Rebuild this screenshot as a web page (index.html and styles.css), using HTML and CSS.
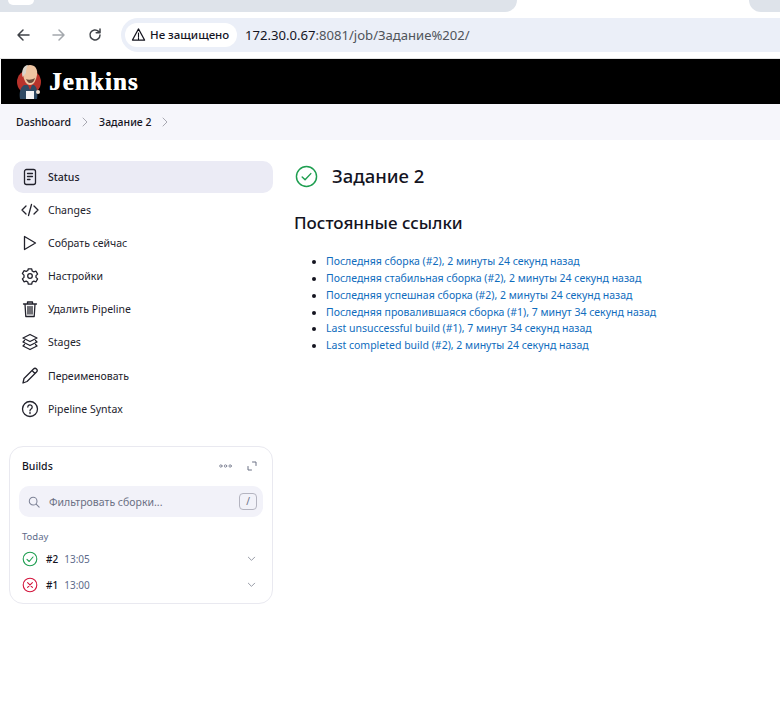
FILE: index.html
```html
<!DOCTYPE html>
<html lang="ru">
<head>
    <meta charset="UTF-8">
    <meta name="viewport" content="width=device-width, initial-scale=1.0">
    <title>Задание 2 - Jenkins</title>
    <link rel="stylesheet" href="styles.css">
</head>
<body>
    <div class="tab-strip">
        <div class="tab-left"><span class="tab-nub"></span></div>
        <div class="tab-right"></div>
    </div>
    <div class="toolbar">
        <svg class="nav-icon" viewBox="0 0 16 16"><path d="M14 8H3M8 3 3 8l5 5"/></svg>
        <svg class="nav-icon nav-off" viewBox="0 0 16 16"><path d="M2 8h11M8 3l5 5-5 5"/></svg>
        <svg class="nav-icon" viewBox="0 0 16 16"><path d="M13 8a5 5 0 1 1-1.500-3.600L13 5.800M13 2v3.800H9.200"/></svg>
        <div class="omnibox">
            <div class="not-secure">
                <svg class="warn-icon" viewBox="0 0 16 16"><path d="M8 2 1.500 14h13zM8 6.500v4M8 11.500v1.200"/></svg>
                <span>Не защищено</span>
            </div>
            <div class="url"><b>172.30.0.67</b>:8081/job/Задание%202/</div>
        </div>
    </div>

    <header class="site-header">
        <svg class="logo" viewBox="0 0 26 36">
            <circle cx="13" cy="18" r="12" fill="#b8332c"/>
            <path d="M4 35c-1-6 0-11 4-14h10c3 2 4 7 3 14z" fill="#2f4a63"/>
            <path d="M7 11C6 5 9 1 14 1s8 4 7 10c-1 5-3 10-7 10-4 0-6-5-7-10z" fill="#eec4a2"/>
            <path d="M6.500 13C5 6 8 1 12 1c-2 3-2 6-2 8-1 1-2 2-3.500 4z" fill="#d9d4cc"/>
            <path d="M10 15c2 1 6 1 9-1-1 3-2 5-5 5-2 0-3-2-4-4z" fill="#6b4a3a"/>
            <path d="M12 21l2 5 2-5z" fill="#b8332c"/>
            <rect x="10" y="27" width="8" height="8" fill="#f4f4f4"/>
            <circle cx="22" cy="28" r="2" fill="#f0e0d0"/>
        </svg>
        <span class="brand">Jenkins</span>
    </header>

    <nav class="breadcrumbs">
        <span>Dashboard</span>
        <svg class="crumb-sep" viewBox="0 0 8 10"><path d="M2 1l4 4-4 4"/></svg>
        <span>Задание 2</span>
        <svg class="crumb-sep" viewBox="0 0 8 10"><path d="M2 1l4 4-4 4"/></svg>
    </nav>

    <div class="layout">
        <aside class="sidebar">
            <ul class="tasks">
                <li class="task task-active">
                    <svg class="task-icon" viewBox="0 0 18 18"><rect x="3.500" y="1.500" width="11" height="15" rx="2"/><path d="M6.500 5.500h5M6.500 8.500h5M6.500 11.500h2.500"/></svg>
                    <span>Status</span>
                </li>
                <li class="task">
                    <svg class="task-icon" viewBox="0 0 18 18"><path d="M5 5 1 9l4 4M13 5l4 4-4 4M10.500 3.500l-3 11"/></svg>
                    <span>Changes</span>
                </li>
                <li class="task">
                    <svg class="task-icon" viewBox="0 0 18 18"><path d="M3.500 2.500v13l11-6.500z"/></svg>
                    <span>Собрать сейчас</span>
                </li>
                <li class="task">
                    <svg class="task-icon" viewBox="0 0 18 18"><path d="M7.300 1.800h3.400l.5 2.200 1.600.9 2.200-.7 1.600 2.900-1.600 1.500v1.800l1.600 1.500-1.600 2.900-2.200-.7-1.600.9-.5 2.200H7.300l-.5-2.200-1.600-.9-2.200.7-1.600-2.900 1.600-1.500V8.100L1.400 6.600 3 3.700l2.200.7 1.600-.9z"/><circle cx="9" cy="9" r="2.300"/></svg>
                    <span>Настройки</span>
                </li>
                <li class="task">
                    <svg class="task-icon" viewBox="0 0 18 18"><path d="M2.500 4h13M6.500 4V2h5v2M4 4l.8 12.500h8.400L14 4M7 6.500v7.500M9 6.500v7.500M11 6.500v7.500"/></svg>
                    <span>Удалить Pipeline</span>
                </li>
                <li class="task">
                    <svg class="task-icon" viewBox="0 0 18 18"><path d="M9 1.500 2 5l7 3.500L16 5zM3.500 7.500 2 9l7 3.500L16 9l-1.500-1.500M3.500 11.500 2 13l7 3.500 7-3.500-1.500-1.500"/></svg>
                    <span>Stages</span>
                </li>
                <li class="task">
                    <svg class="task-icon" viewBox="0 0 18 18"><path d="M2 16l1-4.500L12.500 2a1.800 1.800 0 0 1 3 3L6 14.500zM11 3.500l3 3"/></svg>
                    <span>Переименовать</span>
                </li>
                <li class="task">
                    <svg class="task-icon" viewBox="0 0 18 18"><circle cx="9" cy="9" r="7.500"/><path d="M6.800 7a2.200 2.200 0 1 1 3.300 2c-.8.500-1.100.9-1.100 1.800M9 12.500v1"/></svg>
                    <span>Pipeline Syntax</span>
                </li>
            </ul>

            <section class="builds">
                <div class="builds-head">
                    <span class="builds-title">Builds</span>
                    <svg class="dots" viewBox="0 0 14 4"><circle cx="2" cy="2" r="1.300"/><circle cx="7" cy="2" r="1.300"/><circle cx="12" cy="2" r="1.300"/></svg>
                    <svg class="expand" viewBox="0 0 10 10"><path d="M5.500 1H9v3.500M1 5.500V9h3.500"/></svg>
                </div>
                <div class="filter">
                    <svg class="search-icon" viewBox="0 0 14 14"><circle cx="6" cy="6" r="4.500"/><path d="M9.500 9.500 13 13"/></svg>
                    <span class="filter-text">Фильтровать сборки...</span>
                    <kbd class="slash">/</kbd>
                </div>
                <div class="day">Today</div>
                <div class="build">
                    <svg class="build-icon ok" viewBox="0 0 16 16"><circle cx="8" cy="8" r="6.800"/><path d="M5 8.300l2.200 2.200L11 6"/></svg>
                    <span class="build-num">#2</span>
                    <span class="build-time">13:05</span>
                    <svg class="chev" viewBox="0 0 10 6"><path d="M1.500 1 5 4.500 8.500 1"/></svg>
                </div>
                <div class="build">
                    <svg class="build-icon fail" viewBox="0 0 16 16"><circle cx="8" cy="8" r="6.800"/><path d="M5.600 5.600l4.800 4.800M10.400 5.600l-4.800 4.800"/></svg>
                    <span class="build-num">#1</span>
                    <span class="build-time">13:00</span>
                    <svg class="chev" viewBox="0 0 10 6"><path d="M1.500 1 5 4.500 8.500 1"/></svg>
                </div>
            </section>
        </aside>

        <main class="content">
            <div class="job-title">
                <svg class="job-icon" viewBox="0 0 24 24"><circle cx="12" cy="12" r="10.500"/><path d="M7.500 12.500l3 3 6-6.500"/></svg>
                <h1>Задание 2</h1>
            </div>
            <h2>Постоянные ссылки</h2>
            <ul class="permalinks">
                <li><a href="#">Последняя сборка (#2), 2 минуты 24 секунд назад</a></li>
                <li><a href="#">Последняя стабильная сборка (#2), 2 минуты 24 секунд назад</a></li>
                <li><a href="#">Последняя успешная сборка (#2), 2 минуты 24 секунд назад</a></li>
                <li><a href="#">Последняя провалившаяся сборка (#1), 7 минут 34 секунд назад</a></li>
                <li><a href="#">Last unsuccessful build (#1), 7 минут 34 секунд назад</a></li>
                <li><a href="#">Last completed build (#2), 2 минуты 24 секунд назад</a></li>
            </ul>
        </main>
    </div>
</body>
</html>
```

FILE: styles.css
```css
* {
    box-sizing: border-box;
}

body {
    margin: 0;
    padding: 0;
    height: 710px;
    overflow: hidden;
    background-color: #fff;
    color: #14141f;
    font-family: "Noto Sans", Arial, sans-serif;
    font-size: 10.500px;
}

svg {
    display: block;
    flex: none;
    fill: none;
    stroke: currentColor;
    stroke-linecap: round;
    stroke-linejoin: round;
}

/* browser chrome */
.tab-strip {
    display: flex;
    justify-content: space-between;
    height: 12px;
}

.tab-left {
    width: 517px;
    background-color: #dee3ea;
    border-bottom-right-radius: 12px;
    padding-left: 8px;
}

.tab-nub {
    display: block;
    width: 26px;
    height: 5px;
    background-color: #fff;
    border-bottom-left-radius: 6px;
    border-bottom-right-radius: 6px;
}

.tab-right {
    width: 31px;
    background-color: #dee3ea;
    border-bottom-left-radius: 12px;
}

.toolbar {
    display: flex;
    align-items: center;
    height: 47px;
    padding: 6px 0 7px 15px;
    border-bottom: 1px solid #e4e4e4;
}

.nav-icon {
    width: 16px;
    height: 16px;
    margin-right: 20px;
    color: #3f4348;
    stroke-width: 1.500;
}

.nav-off {
    color: #a4a8ad;
}

.omnibox {
    display: flex;
    align-items: center;
    flex: 1;
    height: 34px;
    margin-left: -2px;
    padding-left: 4px;
    background-color: #ebeff8;
    border-radius: 17px 0 0 17px;
}

.not-secure {
    display: flex;
    align-items: center;
    gap: 4px;
    width: 112px;
    height: 24px;
    padding-left: 6px;
    background-color: #fff;
    border-radius: 12px;
    font-size: 11.500px;
    font-weight: 500;
    white-space: nowrap;
}

.warn-icon {
    width: 15px;
    height: 15px;
    stroke-width: 1.200;
}

.url {
    margin-left: 8px;
    font-size: 13.100px;
    color: #50545a;
}

.url b {
    font-weight: 400;
    color: #14141f;
}

/* jenkins header */
.site-header {
    display: flex;
    align-items: center;
    gap: 7px;
    height: 45px;
    margin-left: 1px;
    padding-left: 15px;
    background-color: #000;
}

.logo {
    width: 26px;
    height: 36px;
    stroke: none;
}

.brand {
    font-family: "Liberation Serif", serif;
    font-size: 25px;
    font-weight: 700;
    letter-spacing: 1.100px;
    color: #fff;
    text-shadow: .5px 0 0 #fff;
}

.breadcrumbs {
    display: flex;
    align-items: center;
    height: 36px;
    padding-left: 16px;
    background-color: #f6f6fb;
    font-weight: 500;
}

.crumb-sep {
    width: 8px;
    height: 10px;
    margin: 0 10px;
    color: #a9a9b2;
    stroke-width: 1;
}

.layout {
    display: flex;
}

/* sidebar */
.sidebar {
    width: 273px;
    flex: none;
    padding: 21px 0 0 9px;
}

.tasks {
    list-style: none;
    margin: 0;
    padding: 0 0 0 4px;
}

.task {
    display: flex;
    align-items: center;
    gap: 9px;
    height: 33.200px;
    padding-left: 8px;
    border-radius: 10px;
    color: #22222c;
}

.task-active {
    height: 32px;
    padding-bottom: 1px;
    background-color: #ebebf5;
    font-weight: 500;
}

.task-icon {
    width: 18px;
    height: 18px;
    stroke-width: 1.300;
}

.builds {
    height: 158px;
    margin-top: 21px;
    padding: 0 9px;
    border: 1px solid #e9e9f0;
    border-radius: 14px;
}

.builds-head {
    display: flex;
    align-items: center;
    height: 38px;
    margin-bottom: 1px;
    padding: 0 6px 0 3px;
}

.builds-title {
    flex: 1;
    font-weight: 500;
}

.dots {
    width: 13px;
    height: 4px;
    margin-right: 15px;
    color: #6b7084;
    stroke-width: .8;
}

.expand {
    width: 10px;
    height: 10px;
    color: #6b7084;
    stroke-width: 1;
}

.filter {
    display: flex;
    align-items: center;
    height: 31px;
    padding: 0 6px 0 9px;
    background-color: #f2f2f9;
    border-radius: 10px;
}

.search-icon {
    width: 12px;
    height: 12px;
    color: #7d8296;
    stroke-width: 1.200;
}

.filter-text {
    flex: 1;
    margin-left: 9px;
    color: #6b7084;
}

.slash {
    width: 18px;
    height: 17px;
    border: 1px solid #b4b4c0;
    border-radius: 4px;
    font-family: "Noto Sans", Arial, sans-serif;
    font-size: 10px;
    line-height: 15px;
    text-align: center;
    color: #6b7084;
}

.day {
    margin: 12px 0 2px 3px;
    font-size: 9.500px;
    line-height: 15px;
    color: #5d6b8a;
}

.build {
    display: flex;
    align-items: center;
    height: 26px;
    padding: 0 7px 0 3px;
}

.build-icon {
    width: 16px;
    height: 16px;
    stroke-width: 1.100;
}

.ok {
    color: #1e9e50;
}

.fail {
    color: #d3143c;
}

.build-num {
    margin-left: 8px;
    font-size: 10px;
    font-weight: 500;
}

.build-time {
    flex: 1;
    margin-left: 6px;
    font-size: 10px;
    color: #5d6b8a;
}

.chev {
    width: 9px;
    height: 6px;
    color: #8b8f9c;
    stroke-width: 1;
}

/* main column */
.content {
    flex: 1;
    padding: 21px 0 0 21px;
}

.job-title {
    display: flex;
    align-items: center;
    gap: 14px;
    height: 30px;
    margin-left: 1px;
}

.job-icon {
    width: 23px;
    height: 23px;
    color: #1e9e50;
    stroke-width: 1.500;
}

h1 {
    margin: 0;
    font-size: 18.500px;
    font-weight: 500;
    line-height: 30px;
}

h2 {
    margin: 19px 0 0;
    font-size: 17px;
    font-weight: 500;
    line-height: 26px;
}

.permalinks {
    margin: 17px 0 0;
    padding-left: 32px;
    line-height: 16.850px;
}

.permalinks a {
    color: #0f6cbd;
    text-decoration: none;
}
```
